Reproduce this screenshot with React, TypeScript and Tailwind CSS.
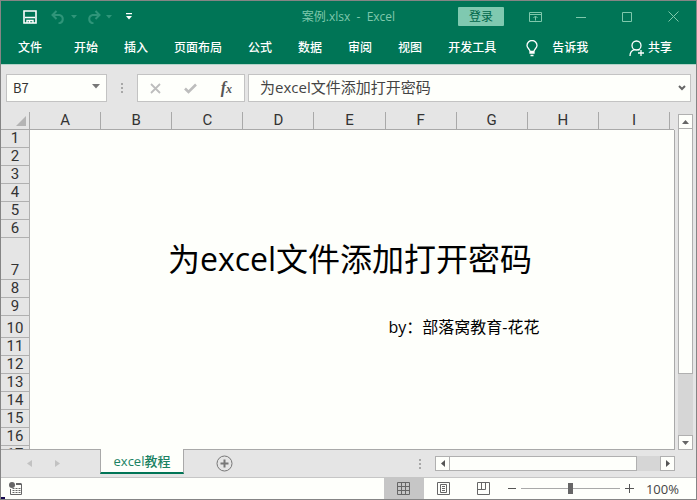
import { useState } from "react";
import clsx from "clsx";

const menus = ["开始", "插入", "页面布局", "公式", "数据", "审阅", "视图", "开发工具"];
const columns = ["A", "B", "C", "D", "E", "F", "G", "H", "I"];
const rows = Array.from({ length: 17 }, (_, i) => i + 1);

const rowHeight = (row: number) => {
  if (row === 7) return "h-[42px]";
  if (row === 10) return "h-[22px]";
  return "h-[18px]";
};

function TitleBar() {
  return (
    <div className="grid h-[31px] grid-cols-[1fr_auto_1fr] items-center text-[#7fc8ac]">
      <div className="flex items-center pl-[22px]">
        <button aria-label="保存" className="text-white">
          <svg width="14" height="14" viewBox="0 0 14 14" fill="none" stroke="currentColor">
            <path d="M1 1h12v12H1z" strokeWidth="1.6" />
            <path d="M2 7.500h10" strokeWidth="1.500" />
            <path d="M4 13V10.500h6V13" strokeWidth="1.400" />
            <path d="M6.500 11v2" strokeWidth="1.400" />
          </svg>
        </button>
        <button aria-label="撤消" className="ml-[14px] flex items-center gap-[5px] text-[#2f9579]">
          <svg width="15" height="14" viewBox="0 0 15 14" fill="none" stroke="currentColor" strokeWidth="2">
            <path d="M5.500 1 1.500 5l4 4M2 5h6.500a4.200 4.200 0 0 1 0 8.200H7.500" />
          </svg>
          <svg width="6" height="4" viewBox="0 0 6 4" fill="currentColor">
            <path d="M0 0h6L3 3.500z" />
          </svg>
        </button>
        <button aria-label="恢复" className="ml-[9px] flex items-center gap-[5px] text-[#2f9579]">
          <svg width="15" height="14" viewBox="0 0 15 14" fill="none" stroke="currentColor" strokeWidth="2">
            <path d="M9.500 1l4 4-4 4M13 5H6.500a4.200 4.200 0 0 0 0 8.200h1" />
          </svg>
          <svg width="6" height="4" viewBox="0 0 6 4" fill="currentColor">
            <path d="M0 0h6L3 3.500z" />
          </svg>
        </button>
        <button aria-label="自定义快速访问工具栏" className="ml-[14px] text-white">
          <svg width="6" height="7" viewBox="0 0 6 7" fill="currentColor">
            <path d="M0 0h6v1.300H0zM0 3h6L3 6.500z" />
          </svg>
        </button>
      </div>
      <h1 className="text-xs whitespace-pre">案例.xlsx  -  Excel</h1>
      <div className="flex items-center justify-end">
        <button className="mr-[8px] h-[19px] w-[46px] rounded-[1px] bg-[#7fc9b0] text-xs leading-[18px] text-[#00664a]">
          登录
        </button>
        <button aria-label="功能区显示选项" className="flex w-[46px] justify-center">
          <svg width="13" height="10" viewBox="0 0 13 10" fill="none" stroke="currentColor">
            <path d="M.5.5h12v9H.5zM.5 2.500h12M6.500 8.500V4.500M4.500 6l2-2 2 2" />
          </svg>
        </button>
        <button aria-label="最小化" className="flex w-[46px] justify-center">
          <svg width="10" height="10" viewBox="0 0 10 10" stroke="currentColor">
            <path d="M0 5.500h10" />
          </svg>
        </button>
        <button aria-label="最大化" className="flex w-[46px] justify-center">
          <svg width="10" height="10" viewBox="0 0 10 10" fill="none" stroke="currentColor">
            <path d="M.5.5h9v9h-9z" />
          </svg>
        </button>
        <button aria-label="关闭" className="flex w-[46px] justify-center">
          <svg width="11" height="11" viewBox="0 0 11 11" stroke="currentColor">
            <path d="M.5.5l10 10M10.500.5l-10 10" />
          </svg>
        </button>
      </div>
    </div>
  );
}

function RibbonTabs() {
  return (
    <nav className="flex h-8 items-center pr-6 pl-[17px] text-xs font-medium text-white">
      <button className="mr-8 shrink-0">文件</button>
      <div className="flex shrink-0 gap-[26px]">
        {menus.map((menu) => (
          <button key={menu}>{menu}</button>
        ))}
      </div>
      <button className="ml-[30px] flex shrink-0 items-center gap-[14px]">
        <svg width="12" height="17" viewBox="0 0 12 17" fill="none" stroke="currentColor" strokeWidth="1.300">
          <path d="M4 11.500C4 9 1 8.500 1 5.500a5 5 0 0 1 10 0c0 3-3 3.500-3 6v1.500H4zM4 11.500h4M4.500 15.500h3" />
        </svg>
        告诉我
      </button>
      <button className="ml-auto flex shrink-0 items-center gap-[3px]">
        <svg width="16" height="17" viewBox="0 0 16 17" fill="none" stroke="currentColor" strokeWidth="1.300">
          <circle cx="7.500" cy="5.500" r="4.500" />
          <path d="M1 16c0-3.500 2-5.500 4.500-6.300M9.500 9.700l1 .5M12 10v6M9 13h6" />
        </svg>
        共享
      </button>
    </nav>
  );
}

function FormulaBar() {
  return (
    <div className="flex border-t border-[#b3d3c8] pt-[9px] pr-[5px] pb-[10px] pl-[5px]">
      <div className="flex h-7 w-[101px] shrink-0 items-center border border-[#c3c3c3] bg-[#fefffb] px-[6px]">
        <input
          aria-label="名称框"
          defaultValue="B7"
          className="w-full min-w-0 font-['Noto_Sans_CJK_SC',sans-serif] text-[13px] text-[#333] outline-none"
        />
        <svg width="8" height="5" viewBox="0 0 8 5" fill="#777" className="mb-[3px] shrink-0">
          <path d="M0 0h8L4 4.500z" />
        </svg>
      </div>
      <div className="flex w-[30px] shrink-0 flex-col items-center justify-center gap-[2px]">
        <span className="size-[2px] bg-[#a8a8a8]" />
        <span className="size-[2px] bg-[#a8a8a8]" />
        <span className="size-[2px] bg-[#a8a8a8]" />
      </div>
      <div className="flex h-7 w-[108px] shrink-0 items-center border border-[#c3c3c3] bg-[#fefffb]">
        <button aria-label="取消" className="flex flex-1 justify-center">
          <svg width="11" height="11" viewBox="0 0 11 11" stroke="#bdbdbd" strokeWidth="1.800">
            <path d="M1 1l9 9M10 1l-9 9" />
          </svg>
        </button>
        <button aria-label="输入" className="flex flex-1 justify-center">
          <svg width="13" height="11" viewBox="0 0 13 11" fill="none" stroke="#bdbdbd" strokeWidth="2.600">
            <path d="M1 5.500l3.500 3.500L12 1.500" />
          </svg>
        </button>
        <button
          aria-label="插入函数"
          className="flex-1 font-['Liberation_Serif',serif] text-base leading-5 font-bold text-[#555] italic"
        >
          f<span className="text-xs">x</span>
        </button>
      </div>
      <div className="ml-[3px] flex h-7 min-w-0 flex-1 items-center border border-[#c3c3c3] bg-[#fefffb] pr-[4px] pl-[11px]">
        <input
          aria-label="编辑栏"
          defaultValue="为excel文件添加打开密码"
          className="min-w-0 flex-1 pb-[2px] text-[15px] leading-5 text-[#444] outline-none"
        />
        <button aria-label="展开编辑栏">
          <svg width="8" height="6" viewBox="0 0 8 6" fill="none" stroke="#666" strokeWidth="2">
            <path d="M1 1l3 3 3-3" />
          </svg>
        </button>
      </div>
    </div>
  );
}

function RowCells({ row }: { row: number }) {
  if (row === 7) {
    return (
      <>
        <td colSpan={9} className="p-0 text-center align-bottom text-[32px] leading-[42px] whitespace-nowrap">
          为excel文件添加打开密码
        </td>
        <td className="p-0" />
      </>
    );
  }
  if (row === 10) {
    return (
      <>
        <td colSpan={5} className="p-0" />
        <td colSpan={5} className="p-0 pl-[3px] align-bottom text-base leading-[22px] whitespace-nowrap">
          by：部落窝教育-花花
        </td>
      </>
    );
  }
  return <td colSpan={10} className="p-0" />;
}

function Sheet() {
  return (
    <div className="flex min-h-0 flex-1">
      <div className="min-w-0 flex-1 overflow-hidden border-b border-[#a9a9a9] bg-[#fefffb]">
        <table className="w-full table-fixed border-separate border-spacing-0 text-black">
          <thead className="bg-[#e5e5e5] font-['Roboto',sans-serif] text-[15px] leading-[17px] text-[#333]">
            <tr>
              <th className="h-[18px] w-[29px] border-r border-b border-[#a9a9a9] p-0">
                <svg width="10" height="10" viewBox="0 0 10 10" fill="#b4b4b4" className="ml-auto mr-[3px] block">
                  <path d="M10 0v10H0z" />
                </svg>
              </th>
              {columns.map((col) => (
                <th key={col} className="border-r border-b border-[#a9a9a9] p-0 font-normal">
                  {col}
                </th>
              ))}
              <th className="w-1 border-b border-[#a9a9a9] p-0" />
            </tr>
          </thead>
          <tbody>
            {rows.map((row) => (
              <tr key={row} className={rowHeight(row)}>
                <th
                  scope="row"
                  className="border-r border-b border-[#b0b0b0] bg-[#e5e5e5] p-0 align-bottom font-['Roboto',sans-serif] text-[15px] leading-[17px] font-normal text-[#333]"
                >
                  {row}
                </th>
                <RowCells row={row} />
              </tr>
            ))}
          </tbody>
        </table>
      </div>
      <div className="mt-[18px] w-px bg-[#a9a9a9]" />
      <div className="mx-[3px] mt-[2px] flex w-[15px] flex-col bg-[#d6d6d6]">
        <button aria-label="向上滚动" className="flex h-[15px] items-center justify-center border border-[#b0b0b0] bg-[#fefffb]">
          <svg width="7" height="4" viewBox="0 0 7 4" fill="#666">
            <path d="M3.500 0L7 4H0z" />
          </svg>
        </button>
        <div className="flex-1">
          <div className="h-4/5 border border-t-0 border-[#b0b0b0] bg-[#fefffb]" />
        </div>
        <button aria-label="向下滚动" className="flex h-[15px] items-center justify-center border border-[#b0b0b0] bg-[#fefffb]">
          <svg width="7" height="4" viewBox="0 0 7 4" fill="#666">
            <path d="M0 0h7L3.500 4z" />
          </svg>
        </button>
      </div>
    </div>
  );
}

function SheetTabs() {
  return (
    <div className="flex h-[27px] shrink-0 pr-[21px]">
      <div className="flex w-[99px] shrink-0 items-center gap-[23px] pl-[26px]">
        <button aria-label="上一个工作表">
          <svg width="5" height="7" viewBox="0 0 5 7" fill="#c2c2c2">
            <path d="M5 0v7L0 3.500z" />
          </svg>
        </button>
        <button aria-label="下一个工作表">
          <svg width="5" height="7" viewBox="0 0 5 7" fill="#c2c2c2">
            <path d="M0 0v7l5-3.500z" />
          </svg>
        </button>
      </div>
      <button className="-mt-px h-[25px] w-[84px] shrink-0 border-x border-b-2 border-x-[#a9a9a9] border-b-[#007556] bg-[#fefffb] text-[13px] leading-[22px] font-medium text-[#1a8263]">
        excel教程
      </button>
      <button aria-label="新工作表" className="ml-[32px] shrink-0">
        <svg width="17" height="17" viewBox="0 0 17 17" fill="none" stroke="#777">
          <circle cx="8.500" cy="8.500" r="7.500" />
          <path d="M8.500 4.500v8M4.500 8.500h8" strokeWidth="2" />
        </svg>
      </button>
      <div className="ml-auto flex shrink-0 flex-col items-center justify-center gap-[2px]">
        <span className="size-[2px] bg-[#a8a8a8]" />
        <span className="size-[2px] bg-[#a8a8a8]" />
        <span className="size-[2px] bg-[#a8a8a8]" />
      </div>
      <div className="my-[6px] ml-[14px] flex w-[240px] bg-[#d6d6d6]">
        <button aria-label="向左滚动" className="flex w-[15px] items-center justify-center border border-[#b0b0b0] bg-[#fefffb]">
          <svg width="4" height="7" viewBox="0 0 4 7" fill="#555">
            <path d="M4 0v7L0 3.500z" />
          </svg>
        </button>
        <div className="flex-1">
          <div className="h-full w-8/9 border border-l-0 border-[#b0b0b0] bg-[#fefffb]" />
        </div>
        <button aria-label="向右滚动" className="flex w-[15px] items-center justify-center border border-[#b0b0b0] bg-[#fefffb]">
          <svg width="4" height="7" viewBox="0 0 4 7" fill="#555">
            <path d="M0 0v7l4-3.500z" />
          </svg>
        </button>
      </div>
    </div>
  );
}

const views = [
  { name: "普通", path: "M.5.5h12v12H.5zM4.500.5v12M8.500.5v12M.5 4.500h12M.5 8.500h12" },
  { name: "页面布局", path: "M.5.5h12v12H.5zM3.500 2.500h6v8h-6zM5 4.500h3M5 6.500h3M5 8.500h3" },
  { name: "分页预览", path: "M.5.5h12v12H.5zM.5 7.500h8v-7M4.500.5v7" },
];

function StatusBar() {
  const [view, setView] = useState("普通");
  const [zoom, setZoom] = useState(100);

  return (
    <div className="flex h-[22px] shrink-0 items-center border-t border-[#c6c6c6] bg-[#fefffb] pr-[17px] pl-[8px] text-[#666]">
      <button aria-label="录制宏">
        <svg width="13" height="13" viewBox="0 0 13 13" fill="none" stroke="#666">
          <circle cx="3" cy="3" r="3" fill="#666" stroke="none" />
          <path d="M7 1.500h5.500M7 2.500h5.500" />
          <path d="M12.500 2v10.500h-11V7M3.500 6.500h2M6.500 6.500h2M9.500 6.500h2M3.500 8.500h2M6.500 8.500h2M9.500 8.500h2M3.500 10.500h2M6.500 10.500h2M9.500 10.500h2" />
        </svg>
      </button>
      <div className="ml-auto flex h-full">
        {views.map((item) => (
          <button
            key={item.name}
            aria-label={item.name}
            onClick={() => setView(item.name)}
            className={clsx("flex w-10 items-center justify-center", view === item.name && "bg-[#c6c6c6]")}
          >
            <svg width="14" height="13" viewBox="0 0 14 13" preserveAspectRatio="none" fill="none" stroke="#666">
              <path d={item.path} />
            </svg>
          </button>
        ))}
      </div>
      <button aria-label="缩小" className="ml-[4px]" onClick={() => setZoom(Math.max(10, zoom - 10))}>
        <svg width="8" height="9" viewBox="0 0 8 9" stroke="#555">
          <path d="M0 4.500h8" />
        </svg>
      </button>
      <input
        type="range"
        aria-label="显示比例"
        min={10}
        max={190}
        value={zoom}
        onChange={(e) => setZoom(Number(e.target.value))}
        className="mx-[5px] h-3 w-[99px] appearance-none bg-transparent [&::-webkit-slider-runnable-track]:h-px [&::-webkit-slider-runnable-track]:bg-[#a9a9a9] [&::-webkit-slider-thumb]:-mt-[5px] [&::-webkit-slider-thumb]:h-[11px] [&::-webkit-slider-thumb]:w-[5px] [&::-webkit-slider-thumb]:appearance-none [&::-webkit-slider-thumb]:bg-[#666]"
      />
      <button aria-label="放大" onClick={() => setZoom(Math.min(190, zoom + 10))}>
        <svg width="9" height="9" viewBox="0 0 9 9" stroke="#555">
          <path d="M0 4.500h9M4.500 0v9" />
        </svg>
      </button>
      <span className="ml-[11px] w-[34px] text-right text-[13px] leading-5 text-[#444]">{zoom}%</span>
    </div>
  );
}

export default function App() {
  return (
    <div className="relative flex h-screen flex-col overflow-hidden border border-[#858585] bg-[#e5e5e5] font-['Open_Sans','Noto_Sans_CJK_SC',sans-serif]">
      <header className="shrink-0 bg-[#007556]">
        <TitleBar />
        <RibbonTabs />
      </header>
      <FormulaBar />
      <Sheet />
      <SheetTabs />
      <StatusBar />
      <span className="absolute -bottom-px -left-px h-[3px] w-[5px] bg-[#16084f]" />
    </div>
  );
}
